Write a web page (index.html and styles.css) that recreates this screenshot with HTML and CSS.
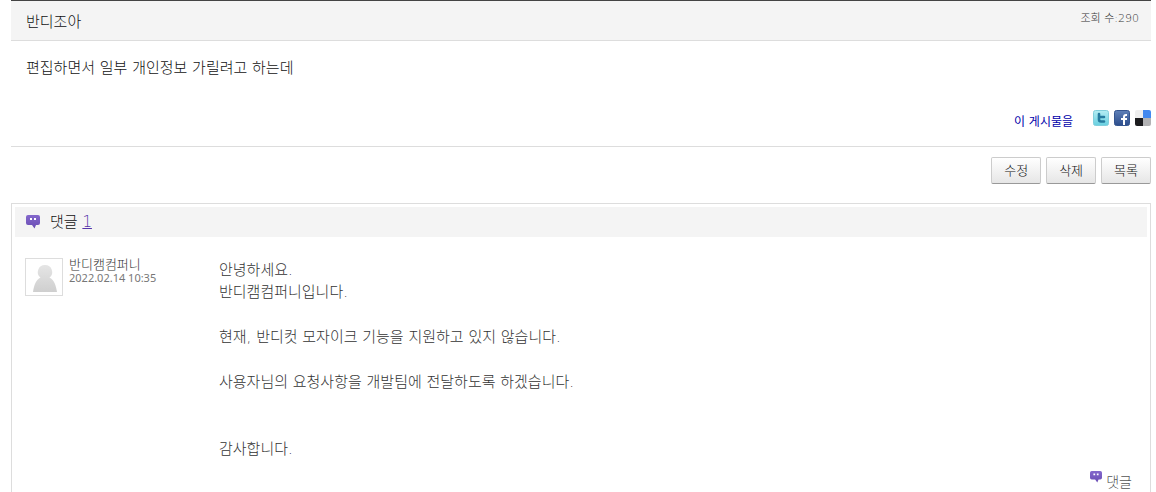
FILE: index.html
```
<!DOCTYPE html>
<html lang="ko">
<head>
    <meta charset="UTF-8">
    <meta name="viewport" content="width=device-width, initial-scale=1.0">
    <title>반디조아</title>
    <link rel="stylesheet" href="styles.css">
</head>
<body>
    <!-- Shared icons -->
    <svg class="icon-defs" aria-hidden="true">
        <linearGradient id="bubble-fill" x1="0" y1="0" x2="0" y2="1">
            <stop offset="0" stop-color="#8468cc"/>
            <stop offset="1" stop-color="#6a4db4"/>
        </linearGradient>
        <symbol id="bubble" viewBox="0 0 14 14">
            <path d="M2 0h10q2 0 2 2v6q0 2-2 2h-2L8.500 13.500 6 10H2Q0 10 0 8V2q0-2 2-2z" fill="url(#bubble-fill)"/>
            <path d="M4 3h2v2H4zM8 3h2v2H8z" fill="#fff"/>
        </symbol>
    </svg>

    <!-- Post -->
    <article class="post">
        <header class="post-header">
            <h1>반디조아</h1>
            <span class="views">조회 수:290</span>
        </header>
        <p class="post-text">편집하면서 일부 개인정보 가릴려고 하는데</p>
        <div class="share">
            <a class="share-label" href="#">이 게시물을</a>
            <a class="share-icon" href="#" aria-label="Twitter">
                <svg width="16" height="16" viewBox="0 0 16 16">
                    <linearGradient id="tw" x1="0" y1="0" x2="0" y2="1">
                        <stop offset="0" stop-color="#b5edf3"/>
                        <stop offset="1" stop-color="#67cfe0"/>
                    </linearGradient>
                    <rect x=".5" y=".5" width="15" height="15" rx="2" fill="url(#tw)" stroke="#82cfdc"/>
                    <path d="M6 4v5.500q0 2 2 2h3M6 7h5" fill="none" stroke="#257b9f" stroke-width="2.600" stroke-linecap="round"/>
                </svg>
            </a>
            <a class="share-icon" href="#" aria-label="Facebook">
                <svg width="16" height="16" viewBox="0 0 16 16">
                    <linearGradient id="fb" x1="0" y1="0" x2="0" y2="1">
                        <stop offset="0" stop-color="#5f80b8"/>
                        <stop offset="1" stop-color="#2c4d8c"/>
                    </linearGradient>
                    <rect x=".5" y=".5" width="15" height="15" rx="2" fill="url(#fb)" stroke="#35558f"/>
                    <path d="M13 5h-1q-2 0-2 2v8M7 9h6" fill="none" stroke="#fff" stroke-width="2"/>
                </svg>
            </a>
            <a class="share-icon" href="#" aria-label="Delicious">
                <svg width="16" height="16" viewBox="0 0 16 16">
                    <path d="M2 0h6v8H0V2q0-2 2-2z" fill="#eee"/>
                    <path d="M8 0h6q2 0 2 2v6H8z" fill="#4389f0"/>
                    <path d="M0 8h8v8H2q-2 0-2-2z" fill="#1c1c1f"/>
                    <path d="M8 8h8v6q0 2-2 2H8z" fill="#b2b2b4"/>
                </svg>
            </a>
        </div>
    </article>

    <div class="buttons">
        <button type="button">수정</button>
        <button type="button">삭제</button>
        <button type="button">목록</button>
    </div>

    <!-- Comments -->
    <section class="comments">
        <h2>
            <svg class="bubble" width="14" height="14"><use href="#bubble"/></svg>
            <span>댓글 <a href="#">1</a></span>
        </h2>
        <div class="comment">
            <div class="author">
                <svg class="avatar" width="36" height="36" viewBox="0 0 36 36">
                    <linearGradient id="person" x1="0" y1="0" x2="0" y2="1">
                        <stop offset="0" stop-color="#e5e5e5"/>
                        <stop offset="1" stop-color="#cfcfcf"/>
                    </linearGradient>
                    <path d="M19 6a7 7 0 0 1 4.500 12.500C28 21 30 26 31 33H7c1-7 3-12 7.500-14.500A7 7 0 0 1 19 6z" fill="url(#person)"/>
                </svg>
                <div>
                    <div class="name">반디캠컴퍼니</div>
                    <div class="date">2022.02.14 10:35</div>
                </div>
            </div>
            <div class="comment-text">
                <p>안녕하세요.<br>반디캠컴퍼니입니다.</p>
                <p>현재, 반디컷 모자이크 기능을 지원하고 있지 않습니다.</p>
                <p>사용자님의 요청사항을 개발팀에 전달하도록 하겠습니다.</p>
                <p class="closing">감사합니다.</p>
            </div>
        </div>
        <div class="comment-actions">
            <a href="#"><svg width="12" height="12"><use href="#bubble"/></svg>댓글</a>
        </div>
    </section>
</body>
</html>
```

FILE: styles.css
```
/* General Styling */
* { box-sizing: border-box; }
body { margin: 0 5px 0 11px; font-family: "DejaVu Sans", "Noto Sans CJK KR", sans-serif; font-size: 15px; font-weight: 300; line-height: 22px; color: #111; background-color: #fff; }
h1, h2, p { margin: 0; font-size: 15px; font-weight: 300; }
svg { display: block; }
.icon-defs { position: absolute; width: 0; height: 0; }

/* Post */
.post { border-bottom: 1px solid #ddd; }
.post-header { display: flex; justify-content: space-between; padding: 10px 12px 7px 15px; border-top: 1px solid #444; border-bottom: 1px solid #ddd; background-color: #f4f4f4; }
.views { font-size: 11px; line-height: 16px; color: #333; }
.post-text { padding: 16px 15px 0; }

/* Share Links */
.share { display: flex; justify-content: flex-end; align-items: flex-start; gap: 5px; margin-top: 31px; padding-bottom: 12px; }
.share-label { margin-right: 15px; font-size: 12px; line-height: 24px; color: #00a; font-weight: 400; text-decoration: none; }

/* Buttons */
.buttons { display: flex; justify-content: flex-end; gap: 5px; margin-top: 10px; }
.buttons button { padding: 2px 12px; border: 1px solid #ccc; border-bottom-color: #999; border-radius: 2px; background: linear-gradient(#fff, #e6e6e6); font: inherit; font-size: 13px; line-height: 21px; color: #111; cursor: pointer; }

/* Comments */
.comments { margin-top: 19px; padding: 3px 3px 0; border: 1px solid #ddd; border-bottom: 0; }
.comments h2 { display: flex; align-items: center; gap: 10px; padding: 4px 11px; background-color: #f4f4f4; }
.comments h2 a { color: #53a; }
.comment { display: flex; padding: 21px 10px 0; }
.author { display: flex; flex: none; gap: 6px; width: 194px; }
.avatar { box-sizing: content-box; flex: none; border: 1px solid #ddd; }
.name { font-size: 13px; line-height: 13px; color: #333; }
.date { font-family: "Noto Sans", sans-serif; font-size: 11px; font-weight: 400; line-height: 14px; color: #777; }
.comment-text { padding-top: 1px; color: #333; }
.comment-text p { margin-bottom: 23px; }
.comment-text .closing { margin: 45px 0 11px; }
.comment-actions { display: flex; justify-content: flex-end; padding-right: 15px; }
.comment-actions a { display: flex; gap: 4px; font-size: 14px; color: #555; text-decoration: none; }
```
